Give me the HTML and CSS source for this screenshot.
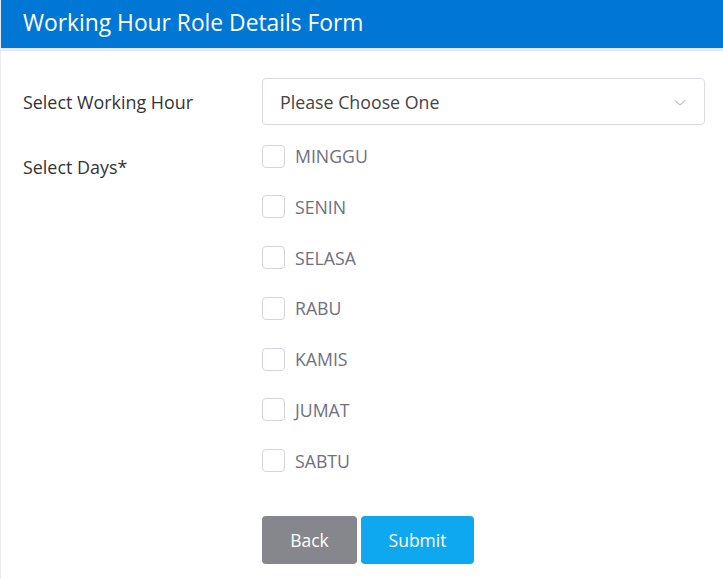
FILE: index.html
```html
<!DOCTYPE html>
<html>
<head>
<meta charset="utf-8">
<link rel="stylesheet" href="styles.css">
</head>
<body>
<div class="page">
  <header class="header"><h1 class="title">Working Hour Role Details Form</h1></header>
  <div class="strip"></div>
  <form class="form">
    <div class="row row-select">
      <label class="label">Select Working Hour</label>
      <div class="select">
        <span class="select-text">Please Choose One</span>
        <svg class="chevron" width="12" height="8" viewBox="0 0 12 8"><path d="M1 1.5 L6 6 L11 1.5" fill="none" stroke="#c4c6cc" stroke-width="1.2"/></svg>
      </div>
    </div>
    <div class="row row-days">
      <label class="label label-days">Select Days*</label>
      <div class="days">
        <label class="day"><span class="box"></span><span class="day-text">MINGGU</span></label>
        <label class="day"><span class="box"></span><span class="day-text">SENIN</span></label>
        <label class="day"><span class="box"></span><span class="day-text">SELASA</span></label>
        <label class="day"><span class="box"></span><span class="day-text">RABU</span></label>
        <label class="day"><span class="box"></span><span class="day-text">KAMIS</span></label>
        <label class="day"><span class="box"></span><span class="day-text">JUMAT</span></label>
        <label class="day"><span class="box"></span><span class="day-text">SABTU</span></label>
      </div>
    </div>
    <div class="row row-actions">
      <span></span>
      <div class="actions">
        <button type="button" class="btn btn-back">Back</button>
        <button type="button" class="btn btn-submit">Submit</button>
      </div>
    </div>
  </form>
</div>
</body>
</html>
```

FILE: styles.css
```css
* { box-sizing: border-box; }
html, body { margin: 0; padding: 0; background: #fff; }
body { font-family: "Open Sans", "Noto Sans", sans-serif; }
.page { width: 723px; height: 579px; border-left: 1px solid #ececf0; }
.header { height: 48px; background: #0077d5; display: flex; align-items: center; padding-left: 22px; }
.title { margin: 0; color: #fff; font-weight: 400; font-size: 22.8px; line-height: 30px; padding-bottom: 3px; }
.strip { height: 3px; background: #e6e8f5; }
.form { padding: 27px 18px 0 22px; }
.row { display: grid; grid-template-columns: 239px 1fr; }
.label { font-size: 17.9px; color: #333; line-height: 24px; }
.row-select { align-items: center; }
.select { height: 47px; border: 1px solid #d9dbe1; border-radius: 4px; display: flex; align-items: center; justify-content: space-between; padding: 0 18px 0 17px; }
.select-text { font-size: 17.8px; color: #444; }
.chevron { margin-top: 3px; }
.row-days { margin-top: 20px; }
.label-days { padding-top: 10px; }
.days { display: flex; flex-direction: column; gap: 28.8px; }
.day { display: flex; align-items: center; height: 22px; }
.box { width: 23px; height: 23px; border: 1px solid #d3d5db; border-radius: 4px; margin-right: 10px; flex: none; }
.day-text { font-size: 17.7px; color: #6f6f80; }
.row-actions { margin-top: 44px; }
.actions { display: flex; gap: 4px; }
.btn { height: 48px; border: none; border-radius: 4px; color: #fff; font-family: inherit; font-size: 17.5px; }
.btn-back { width: 95px; background: #85878c; }
.btn-submit { width: 113px; background: #0ea8f0; }
```
